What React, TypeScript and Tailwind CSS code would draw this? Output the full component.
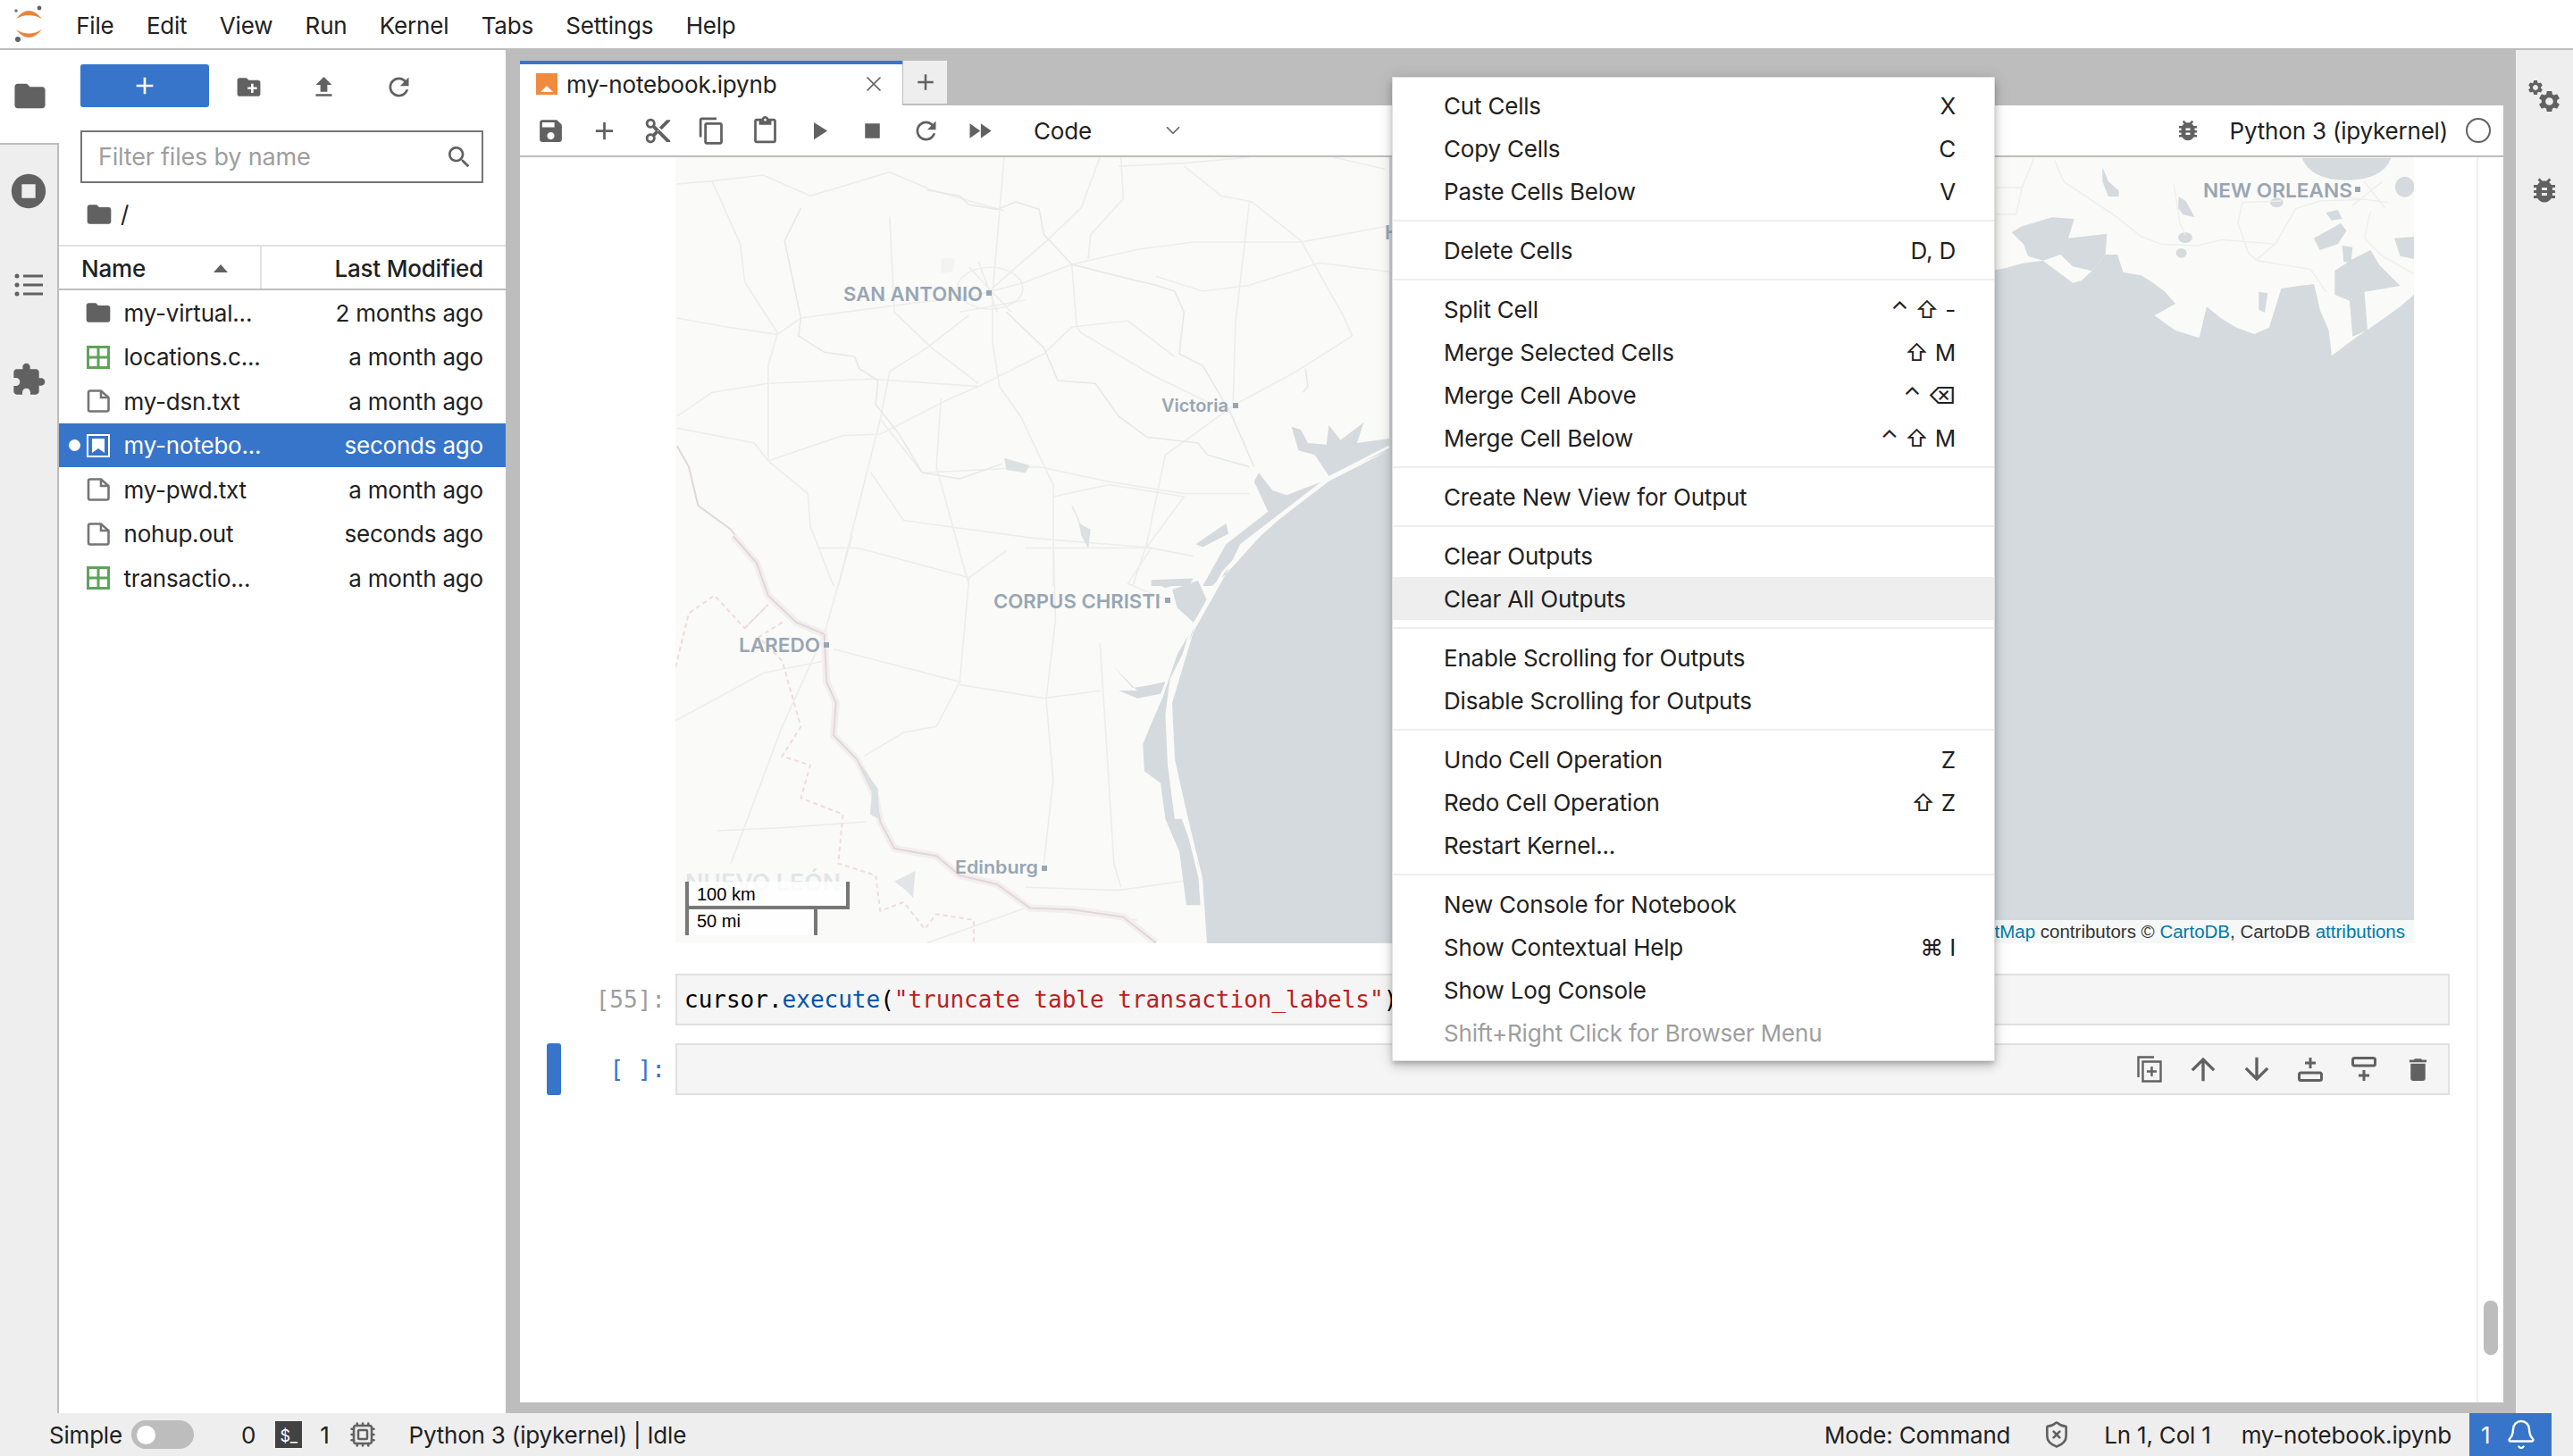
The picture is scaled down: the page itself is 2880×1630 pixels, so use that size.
import { Bell, ChevronDown, Cpu, ShieldX, X } from 'lucide-react';

const paths = {
  folder: 'M10 4H4c-1.1 0-1.99.9-1.99 2L2 18c0 1.1.9 2 2 2h16c1.1 0 2-.9 2-2V8c0-1.1-.9-2-2-2h-8l-2-2z',
  running: 'M12 2C6.48 2 2 6.48 2 12s4.48 10 10 10 10-4.48 10-10S17.52 2 12 2zm4 14H8V8h8v8z',
  puzzle:
    'M20.5 11H19V7c0-1.1-.9-2-2-2h-4V3.5C13 2.12 11.88 1 10.5 1S8 2.12 8 3.5V5H4c-1.1 0-1.99.9-1.99 2v3.8H3.5c1.49 0 2.7 1.21 2.7 2.7s-1.21 2.7-2.7 2.7H2V20c0 1.1.9 2 2 2h3.8v-1.5c0-1.49 1.21-2.7 2.7-2.7 1.49 0 2.7 1.21 2.7 2.7V22H17c1.1 0 2-.9 2-2v-4h1.5c1.38 0 2.5-1.12 2.5-2.5S21.88 11 20.5 11z',
  upload: 'M9 16h6v-6h4l-7-7-7 7h4zm-4 2h14v2H5z',
  refresh:
    'M17.65 6.35C16.2 4.9 14.21 4 12 4c-4.42 0-7.99 3.58-7.99 8s3.57 8 7.99 8c3.73 0 6.84-2.55 7.73-6h-2.08c-.82 2.33-3.04 4-5.65 4-3.31 0-6-2.69-6-6s2.69-6 6-6c1.66 0 3.14.69 4.22 1.78L13 11h7V4l-2.35 2.35z',
  newFolder:
    'M20 6h-8l-2-2H4c-1.11 0-1.99.89-1.99 2L2 18c0 1.11.89 2 2 2h16c1.11 0 2-.89 2-2V8c0-1.11-.89-2-2-2zm-1 8h-3v3h-2v-3h-3v-2h3V9h2v3h3v2z',
  search:
    'M15.5 14h-.79l-.28-.27C15.41 12.59 16 11.11 16 9.5 16 5.91 13.09 3 9.5 3S3 5.91 3 9.5 5.91 16 9.5 16c1.61 0 3.09-.59 4.23-1.57l.27.28v.79l5 4.99L20.49 19l-4.99-5zm-6 0C7.01 14 5 11.99 5 9.5S7.01 5 9.5 5 14 7.01 14 9.5 11.99 14 9.5 14z',
  save: 'M17 3H5c-1.11 0-2 .9-2 2v14c0 1.1.89 2 2 2h14c1.1 0 2-.9 2-2V7l-4-4zm-5 16c-1.66 0-3-1.34-3-3s1.34-3 3-3 3 1.34 3 3-1.34 3-3 3zm3-10H5V5h10v4z',
  add: 'M19 13h-6v6h-2v-6H5v-2h6V5h2v6h6v2z',
  cut: 'M9.64 7.64c.23-.5.36-1.05.36-1.64 0-2.21-1.79-4-4-4S2 3.79 2 6s1.79 4 4 4c.59 0 1.14-.13 1.64-.36L10 12l-2.36 2.36C7.14 14.13 6.59 14 6 14c-2.21 0-4 1.79-4 4s1.79 4 4 4 4-1.79 4-4c0-.59-.13-1.14-.36-1.64L12 14l7 7h3v-1L9.64 7.64zM6 8c-1.1 0-2-.89-2-2s.9-2 2-2 2 .89 2 2-.9 2-2 2zm0 12c-1.1 0-2-.89-2-2s.9-2 2-2 2 .89 2 2-.9 2-2 2zm6-7.5c-.28 0-.5-.22-.5-.5s.22-.5.5-.5.5.22.5.5-.22.5-.5.5zM19 3l-6 6 2 2 7-7V3z',
  copy: 'M16 1H4c-1.1 0-2 .9-2 2v14h2V3h12V1zm3 4H8c-1.1 0-2 .9-2 2v14c0 1.1.9 2 2 2h11c1.1 0 2-.9 2-2V7c0-1.1-.9-2-2-2zm0 16H8V7h11v14z',
  paste:
    'M19 2h-4.18C14.4.84 13.3 0 12 0c-1.3 0-2.4.84-2.82 2H5c-1.1 0-2 .9-2 2v16c0 1.1.9 2 2 2h14c1.1 0 2-.9 2-2V4c0-1.1-.9-2-2-2zm-7 0c.55 0 1 .45 1 1s-.45 1-1 1-1-.45-1-1 .45-1 1-1zm7 18H5V4h2v3h10V4h2v16z',
  run: 'M8 5v14l11-7z',
  stop: 'M6 6h12v12H6z',
  fastForward: 'M4 18l8.5-6L4 6v12zm9-12v12l8.5-6L13 6z',
  bug: 'M20 8h-2.81c-.45-.78-1.07-1.45-1.82-1.96L17 4.41 15.59 3l-2.17 2.17C12.96 5.06 12.49 5 12 5c-.49 0-.96.06-1.41.17L8.41 3 7 4.41l1.62 1.63C7.88 6.55 7.26 7.22 6.81 8H4v2h2.09c-.05.33-.09.66-.09 1v1H4v2h2v1c0 .34.04.67.09 1H4v2h2.81c1.04 1.79 2.97 3 5.19 3s4.15-1.21 5.19-3H20v-2h-2.09c.05-.33.09-.66.09-1v-1h2v-2h-2v-1c0-.34-.04-.67-.09-1H20V8zm-6 8h-4v-2h4v2zm0-4h-4v-2h4v2z',
  up: 'M4 12l1.41 1.41L11 7.83V20h2V7.83l5.58 5.59L20 12l-8-8-8 8z',
  down: 'M20 12l-1.41-1.41L13 16.17V4h-2v12.17l-5.58-5.59L4 12l8 8 8-8z',
  trash: 'M6 19c0 1.1.9 2 2 2h8c1.1 0 2-.9 2-2V7H6v12zM19 4h-3.5l-1-1h-5l-1 1H5v2h14V4z',
  gear: 'M19.14 12.94c.04-.3.06-.61.06-.94 0-.32-.02-.64-.07-.94l2.03-1.58c.18-.14.23-.41.12-.61l-1.92-3.32c-.12-.22-.37-.29-.59-.22l-2.39.96c-.5-.38-1.03-.7-1.62-.94l-.36-2.54c-.04-.24-.24-.41-.48-.41h-3.84c-.24 0-.43.17-.47.41l-.36 2.54c-.59.24-1.13.57-1.62.94l-2.39-.96c-.22-.08-.47 0-.59.22L2.74 8.87c-.12.21-.08.47.12.61l2.03 1.58c-.05.3-.09.63-.09.94s.02.64.07.94l-2.03 1.58c-.18.14-.23.41-.12.61l1.92 3.32c.12.22.37.29.59.22l2.39-.96c.5.38 1.03.7 1.62.94l.36 2.54c.05.24.24.41.48.41h3.84c.24 0 .44-.17.47-.41l.36-2.54c.59-.24 1.13-.56 1.62-.94l2.39.96c.22.08.47 0 .59-.22l1.92-3.32c.12-.22.07-.47-.12-.61l-2.01-1.58zM12 15.6c-1.98 0-3.6-1.62-3.6-3.6s1.62-3.6 3.6-3.6 3.6 1.62 3.6 3.6-1.62 3.6-3.6 3.6z',
};

function Icon({ d, size = 33, className = '' }: { d: string; size?: number; className?: string }) {
  return (
    <svg viewBox="0 0 24 24" width={size} height={size} fill="currentColor" className={className}>
      <path d={d} />
    </svg>
  );
}

function JupyterLogo() {
  return (
    <svg width="67" height="54" viewBox="0 0 67 54" className="shrink-0">
      <path d="M18 21 Q32 3 47 21 Q32 13 18 21Z" fill="#e9833a" />
      <path d="M18 33 Q32 51 47 33 Q32 42 18 33Z" fill="#e9833a" />
      <circle cx="44" cy="9" r="2.4" fill="#616161" />
      <circle cx="18" cy="12" r="1.8" fill="#757575" />
      <circle cx="20" cy="44" r="3" fill="#616161" />
    </svg>
  );
}

function GridFile() {
  return (
    <svg width="26" height="26" viewBox="0 0 26 26" fill="none" stroke="#5ea35a" strokeWidth="3">
      <rect x="1.5" y="1.5" width="23" height="23" />
      <path d="M13 1v24M1 13h24" />
    </svg>
  );
}

function TextFile() {
  return (
    <svg width="26" height="26" viewBox="0 0 26 26" fill="none" stroke="#757575" strokeWidth="2.6">
      <path d="M2 3.5 Q2 1.5 4 1.5 H16 L24.5 9 V22.5 Q24.5 24.5 22.5 24.5 H4 Q2 24.5 2 22.5Z" />
      <path d="M16 1.5 V9 H24.5" />
    </svg>
  );
}

function NotebookFile() {
  return (
    <svg width="26" height="26" viewBox="0 0 26 26">
      <rect x="1" y="1" width="24" height="24" fill="none" stroke="#fff" strokeWidth="2" />
      <path d="M6 5h14v16l-7-5-7 5z" fill="#fff" />
    </svg>
  );
}

const files = [
  { name: 'my-virtual...', when: '2 months ago', kind: 'folder' },
  { name: 'locations.c...', when: 'a month ago', kind: 'grid' },
  { name: 'my-dsn.txt', when: 'a month ago', kind: 'text' },
  { name: 'my-notebo...', when: 'seconds ago', kind: 'notebook' },
  { name: 'my-pwd.txt', when: 'a month ago', kind: 'text' },
  { name: 'nohup.out', when: 'seconds ago', kind: 'text' },
  { name: 'transactio...', when: 'a month ago', kind: 'grid' },
];

function FileBrowser() {
  return (
    <div className="flex w-[500px] shrink-0 flex-col bg-white">
      <div className="flex pl-6 pt-4">
        <div className="flex h-12 w-36 items-center justify-center rounded-[3px] bg-[#3675ca] text-white">
          <Icon d={paths.add} size={32} />
        </div>
        <div className="ml-[2px] flex w-[84px] items-center justify-center pt-[2px] text-[#616161]">
          <Icon d={paths.newFolder} size={31} />
        </div>
        <div className="flex w-[84px] items-center justify-center pt-[2px] text-[#616161]">
          <Icon d={paths.upload} size={31} />
        </div>
        <div className="flex w-[84px] items-center justify-center pt-[2px] text-[#616161]">
          <Icon d={paths.refresh} size={33} />
        </div>
      </div>
      <div className="ml-6 mt-[26px] flex h-[59px] w-[451px] items-center border-2 border-[#757575] pl-[18px] pr-[9px]">
        <input
          readOnly
          placeholder="Filter files by name"
          className="min-w-0 flex-1 bg-transparent pt-[2px] text-[27px] outline-none placeholder:text-[#9e9e9e]"
        />
        <Icon d={paths.search} size={32} className="text-[#616161]" />
      </div>
      <div className="flex h-[69px] items-center pl-[29px] text-[26px] text-[#212121]">
        <Icon d={paths.folder} size={32} className="text-[#616161]" />
        <span className="ml-2">/</span>
      </div>
      <div className="flex h-[51px] border-y-2 border-t-[#e0e0e0] border-b-[#bdbdbd] text-[26px] font-medium text-[#212121]">
        <div className="flex w-[227px] items-center justify-between border-r-2 border-[#e0e0e0] pl-[25px] pr-[36px] pt-[2px]">
          <span>Name</span>
          <svg width="16" height="9" viewBox="0 0 16 9">
            <path d="M8 0l8 9H0z" fill="#616161" />
          </svg>
        </div>
        <div className="flex flex-1 items-center justify-end pr-[25px] pt-[2px]">Last Modified</div>
      </div>
      {files.map((file) => {
        const selected = file.kind === 'notebook';
        return (
          <div
            key={file.name}
            className={`flex h-[49.5px] items-center pr-[25px] pt-[1px] text-[26px] ${
              selected ? 'bg-[#3675ca] text-white' : 'text-[#212121]'
            }`}
          >
            <span className="flex w-[31px] justify-end">
              {selected && <span className="mr-[7px] size-[13px] rounded-full bg-white" />}
            </span>
            <span className="flex w-[41.5px] shrink-0">
              {file.kind === 'folder' && <Icon d={paths.folder} size={32} className="-ml-[3px] text-[#616161]" />}
              {file.kind === 'grid' && <GridFile />}
              {file.kind === 'text' && <TextFile />}
              {file.kind === 'notebook' && <NotebookFile />}
            </span>
            <span>{file.name}</span>
            <span className="ml-auto">{file.when}</span>
          </div>
        );
      })}
    </div>
  );
}

const waterColor = '#d4dadd';
const landColor = '#fafaf8';

function GeoMap() {
  return (
    <svg viewBox="756 176 1946 880" width="1946" height="880" className="block">
      <rect x="756" y="176" width="1946" height="880" fill={landColor} />
      {/* central Texas */}
      <g transform="translate(750 176) scale(.523 .3333)" fill="none" stroke="#ededec" strokeWidth="1.6">
        {[
          'M15 540 L120 570 L230 595 L280 540 L400 515 L520 490 L640 470 L760 420 L860 360 L1000 310 L1120 285 L1350 285 L1540 230',
          'M90 80 L150 290 L160 420 L230 590 L210 700 L210 1020 L295 1130 L300 1240 L350 1440',
          'M715 0 L700 280 L690 460 L690 620 L705 770 L750 870 L820 1100 L820 1440',
          'M920 0 L880 170 L800 290 L740 370 L690 440',
          'M965 0 L970 140 L900 260 L895 340',
          'M1100 30 L1180 130 L1245 150 L1350 280 L1440 530 L1460 600 L1340 720 L1210 830 L1060 1000 L1020 1300 L990 1440',
          'M1040 400 L1140 450 L1240 430 L1390 355 L1540 385',
          'M1240 150 L1210 560 L1205 830',
          'M860 360 L870 570 L880 590 L1030 730 L1200 860',
          'M450 880 L470 720 L550 640 L640 530',
          'M450 880 L360 1440',
          'M470 200 L480 520 L560 640 L660 760',
          'M15 870 L90 790 L210 760 L430 745 L660 770 L800 660 L860 570 L980 550 L1080 670',
          'M15 910 L180 960 L210 1020 L370 935 L450 930 L600 810 L660 770',
          'M450 880 L540 1060 L790 1040 L940 1090 L1100 1130 L1240 1130',
          'M820 1140 L940 1100 L1100 1140 L1020 1310 L1120 1340',
          'M580 810 L570 1040 L640 1440',
          'M430 1060 L500 1220 L780 1280 L1020 1310',
          'M15 90 L90 80 L200 60 L300 130 L470 50 L560 110 L715 180',
          'M960 30 L1100 20 L1240 0',
          'M1530 40 L1420 0',
          'M620 520 L760 480 M640 370 L730 520 M660 350 L700 520',
        ].map((d) => (
          <path key={d} d={d} vectorEffect="non-scaling-stroke" />
        ))}
        <circle cx="685" cy="440" r="70" vectorEffect="non-scaling-stroke" />
        {[
          'M280 170 L245 280 L280 540 L275 600 L330 655 L395 670 L405 710 L445 750 L440 830 L490 930 L540 1060 L620 1080 L710 1030',
          'M550 110 L620 130 L640 160 L700 175 L740 150 L790 175 L800 260 L860 360 L960 400 L1040 430 L1080 450 L1100 520 L1090 660 L1140 700 L1200 860 L1250 1040',
          'M720 520 L800 640 L830 750 L910 760 L960 870 L1020 940 L1130 960 L1150 1000 L1240 1040',
          'M860 1170 L880 1240 L895 1310',
          'M1360 710 L1365 770 L1355 790',
        ].map((d) => (
          <path key={d} d={d} stroke="#e6e9eb" vectorEffect="non-scaling-stroke" />
        ))}
        <path
          d="M15 970 L40 1040 L60 1170 L130 1250 L190 1380 L205 1440"
          stroke="#e2d6d8"
          strokeWidth="2"
          vectorEffect="non-scaling-stroke"
        />
        <path d="M715 1010 L770 1035 L760 1060 L720 1050Z" fill="#dbe0e2" stroke="none" />
        <path d="M875 1230 L900 1250 L895 1315 L880 1270Z" fill="#dbe0e2" stroke="none" />
        <path d="M580 340 L610 340 L605 385 L580 390Z" fill="#f3f4f2" stroke="none" />
      </g>
      {/* south Texas and the Rio Grande */}
      <g transform="translate(750 600) scale(.523 .3333)" fill="none" stroke="#ededec" strokeWidth="1.6">
        {[
          'M390 0 L330 330 L240 640 L130 1100',
          'M820 0 L825 280 L805 550 L820 820 L800 1100',
          'M920 360 L930 600 L950 1100 L965 1180',
          'M620 490 L350 380',
          'M640 140 L620 490 L570 640 L500 660 L415 740',
          'M640 140 L400 40 L320 40',
          'M620 500 L800 545 L920 520',
          'M12 620 L200 460 L330 420',
          'M100 990 L240 980 L420 960',
          'M640 140 L720 50',
          'M760 40 L1030 40',
          'M1030 40 L980 160 L1070 220',
          'M760 1180 L960 1190 L1140 1150',
          'M550 1367 L760 1250 L1000 1290',
        ].map((d) => (
          <path key={d} d={d} vectorEffect="non-scaling-stroke" />
        ))}
        <path
          d="M135 0 L185 90 L210 200 L270 290 L330 330 L335 490 L355 560 L350 670 L400 750 L440 880 L450 960 L480 1050 L570 1075 L620 1140 L700 1170 L770 1250 L860 1255 L970 1280 L1040 1367"
          stroke="#f3efef"
          strokeWidth="8"
          vectorEffect="non-scaling-stroke"
        />
        <path
          d="M135 0 L185 90 L210 200 L270 290 L330 330 L335 490 L355 560 L350 670 L400 750 L440 880 L450 960 L480 1050 L570 1075 L620 1140 L700 1170 L770 1250 L860 1255 L970 1280 L1040 1367"
          stroke="#e2d6d8"
          strokeWidth="2"
          vectorEffect="non-scaling-stroke"
        />
        <path
          d="M12 440 L40 260 L95 200 L160 310 L210 230 L160 310 M240 290 L190 340 L240 420 L280 640 L240 740 L300 770 L280 880 L370 935 L360 1100 L440 1140 L450 1260 L500 1230 L545 1320 L570 1270 L650 1290 L650 1367"
          stroke="#efdcdc"
          strokeWidth="2"
          strokeDasharray="5 4"
          vectorEffect="non-scaling-stroke"
        />
        <path d="M480 1160 L525 1125 L520 1215 L505 1190Z" fill="#e1e5e7" stroke="none" />
        <path d="M405 760 L445 850 L448 950 L428 935 L432 860Z" fill="#dbe0e2" stroke="none" />
      </g>
      {/* gulf: water is drawn on top of the land */}
      <path
        d="M1555 504 L1487 539 L1430 583 L1411 600 L1372 643 L1336 707 L1312 787 L1315 850 L1330 917 L1346 983 L1351 1056 H2702 V176 H1555Z"
        fill={waterColor}
      />
      <g transform="translate(750 176) scale(.523 .3333)" fill={waterColor}>
        <path d="M1330 905 L1350 915 L1365 960 L1405 965 L1410 900 L1435 950 L1485 890 L1470 960 L1540 945 L1540 985 L1410 1070 L1380 1000 L1345 985Z" />
        <path d="M1260 1060 L1290 1120 L1320 1135 L1395 1090 L1290 1215 L1220 1300 L1190 1400 L1160 1440 L1140 1440 L1190 1300 L1280 1190 L1250 1090Z" />
        <path d="M1125 1300 L1190 1230 L1195 1265 L1140 1310Z" />
        <path d="M1030 1420 L1120 1415 L1110 1440 L1030 1440Z" />
      </g>
      <g transform="translate(750 600) scale(.523 .3333)" fill={waterColor}>
        <path d="M1075 180 L1130 150 L1150 220 L1120 290 L1085 240Z" />
        <path d="M1030 150 L1100 155 L1060 175Z" />
        <path d="M1125 290 L1085 400 L1055 540 L1030 630 L1012 700 L1015 790 L1050 830 L1060 950 L1090 1060 L1105 1240 L1140 1240 L1130 1100 L1095 950 L1080 950 L1065 770 L1060 600 L1070 480 L1115 340Z" />
        <path d="M950 440 L990 510 L1030 500 L1060 490 L1050 530 L1000 545 L960 520 L1000 520Z" />
      </g>
      {/* barrier islands along the coast */}
      <path
        d="M1555 500 L1487 535 L1430 579 L1409 597 L1369 641 L1333 706 L1309 787 L1312 850 L1327 917 L1343 983 L1348 1056"
        fill="none"
        stroke={landColor}
        strokeWidth="3"
      />
      {/* Louisiana */}
      <g transform="translate(2220 170) scale(.3333)">
        <path
          d="M0 0 H1446 V480 L1400 520 L1330 570 L1250 625 L1170 685 L1160 600 L1130 530 L1110 445 L1000 460 L960 590 L910 612 L850 590 L800 560 L750 520 L725 625 L645 600 L575 550 L645 510 L610 470 L570 440 L530 415 L470 405 L450 345 L410 345 L365 400 L330 432 L300 440 L200 365 L130 375 L75 390 L0 405Z"
          fill={landColor}
        />
        <g fill={waterColor}>
          <path d="M95 270 L130 250 L230 220 L305 225 L285 290 L415 275 L410 345 L365 400 L300 385 L260 345 L200 365 L150 350 L135 310Z" />
          <path d="M1070 20 H1370 Q1340 95 1220 95 Q1100 95 1070 20Z" />
          <ellipse cx="1415" cy="118" rx="32" ry="34" />
          <path d="M1110 290 L1200 240 L1220 265 L1190 310 L1130 330Z" />
          <path d="M1150 205 L1190 195 L1205 225 L1170 230Z" />
          <path d="M655 150 L680 165 L710 220 L670 210 L655 190Z" />
          <ellipse cx="678" cy="288" rx="24" ry="18" />
          <ellipse cx="665" cy="340" rx="18" ry="16" />
          <ellipse cx="985" cy="170" rx="22" ry="16" />
          <path d="M400 50 L420 100 L455 130 L455 150 L420 150 L400 100Z" />
          <path d="M1180 400 L1240 360 L1300 330 L1330 380 L1400 450 L1280 470 L1290 600 L1240 620 L1230 500 L1180 480Z" />
          <path d="M1205 315 L1240 320 L1235 370 L1210 370Z" />
          <path d="M1380 290 L1446 285 L1446 360 L1400 350Z" />
          <path d="M1000 460 L1060 450 L1110 445 L1130 530 L1060 520 L1000 530Z" />
          <path d="M925 470 L955 475 L945 540 L925 530Z" />
        </g>
        <g fill="none" stroke="#eeeeee" strokeWidth="4">
          <path d="M240 30 L270 100 L450 220 L530 285 L600 310 L720 315 L800 295 L980 310 L1050 190 L1130 165 L1270 160" />
          <path d="M640 110 L660 240 L680 280" />
          <path d="M855 240 L890 340 L920 365 L1100 395 L1150 470" />
          <path d="M855 240 L870 170 L1000 165" />
          <path d="M920 360 L980 310" />
          <path d="M1300 200 L1280 290 L1340 350 L1446 410" />
          <path d="M45 120 H130 L110 210 H45 M130 120 L170 20" />
          <path d="M1200 150 L1360 170 M1280 100 L1350 190 M1240 180 L1340 100" />
        </g>
      </g>
      <g className="font-semibold" fill="#98a6b3" fontFamily="Inter, sans-serif">
        <text x="944" y="337" fontSize="22" textLength="156" lengthAdjust="spacingAndGlyphs">SAN ANTONIO</text>
        <rect x="1104" y="325" width="6" height="6" />
        <text x="1300" y="461" fontSize="20" textLength="75" lengthAdjust="spacingAndGlyphs">Victoria</text>
        <rect x="1380" y="451" width="6" height="6" />
        <text x="1112" y="681" fontSize="22" textLength="187" lengthAdjust="spacingAndGlyphs">CORPUS CHRISTI</text>
        <rect x="1304" y="669" width="6" height="6" />
        <text x="827" y="730" fontSize="22" textLength="91" lengthAdjust="spacingAndGlyphs">LAREDO</text>
        <rect x="922" y="719" width="6" height="6" />
        <text x="1069" y="978" fontSize="20" textLength="93" lengthAdjust="spacingAndGlyphs">Edinburg</text>
        <rect x="1166" y="969" width="6" height="6" />
        <text x="1550" y="268" fontSize="22">H</text>
        <text x="2466" y="221" fontSize="22" textLength="167" lengthAdjust="spacingAndGlyphs">NEW ORLEANS</text>
        <rect x="2636" y="209" width="6" height="6" />
        <text x="767" y="997" fontSize="26" fill="#e2e5e8" textLength="174" lengthAdjust="spacingAndGlyphs">NUEVO LEÓN</text>
      </g>
    </svg>
  );
}

function NotebookOutput() {
  return (
    <div className="relative ml-[174px] h-[880px] w-[1946px] shrink-0 tracking-normal [font-family:'Liberation_Sans',sans-serif]">
      <GeoMap />
      <div className="absolute left-[11px] top-[811px] text-[20px] leading-none text-black">
        <div className="h-[31px] w-[184px] border-x-4 border-b-4 border-[#777] bg-white/80 pl-[9px] pt-[4px]">100 km</div>
        <div className="h-[29px] w-[148px] border-x-4 border-[#777] bg-white/80 pl-[9px] pt-[3px]">50 mi</div>
      </div>
      <div className="absolute bottom-0 right-0 h-[26px] whitespace-nowrap bg-white/80 pl-[12px] pr-[10px] text-[20.5px] leading-[25px] text-[#333]">
        <span className="text-[#0078a8]">OpenStreetMap</span> contributors © <span className="text-[#0078a8]">CartoDB</span>, CartoDB{' '}
        <span className="text-[#0078a8]">attributions</span>
      </div>
    </div>
  );
}

function DuplicateIcon() {
  return (
    <svg width="28" height="30" viewBox="0 0 28 30" fill="none" stroke="#616161" strokeWidth="2.4">
      <path d="M1.5 24 V1.5 H19" />
      <path d="M6.5 6.5 H26.5 V28.5 H6.5Z" />
      <path d="M16.5 12 V23 M11 17.5 H22" />
    </svg>
  );
}

function InsertAbove() {
  return (
    <svg width="28" height="28" viewBox="0 0 28 28" fill="none" stroke="#616161" strokeWidth="3">
      <rect x="1.5" y="18" width="25" height="8.5" rx="2" />
      <path d="M14 1 V13 M8 7 H20" />
    </svg>
  );
}

function InsertBelow() {
  return (
    <svg width="28" height="28" viewBox="0 0 28 28" fill="none" stroke="#616161" strokeWidth="3">
      <rect x="1.5" y="1.5" width="25" height="8.5" rx="2" />
      <path d="M14 15 V27 M8 21 H20" />
    </svg>
  );
}

function Cells() {
  return (
    <div className="font-['DejaVu_Sans_Mono',monospace] text-[26px] tracking-normal">
      <div className="mt-[34px] flex">
        <div className="flex w-[174px] shrink-0 items-center justify-end pr-[11px] text-[#9e9e9e]">[55]:</div>
        <div className="flex h-[58px] w-[1986px] items-center border-2 border-[#e0e0e0] bg-[#f5f5f5] pl-2 whitespace-nowrap text-black">
          cursor.<span className="text-[#0055aa]">execute</span>(
          <span className="text-[#ba2121]">"truncate table transaction_labels"</span>)
        </div>
      </div>
      <div className="mt-[20px] flex">
        <div className="flex w-[174px] shrink-0 items-center pl-[30px] pr-[11px] text-[#3675ca]">
          <span className="h-[58px] w-4 rounded-[3px] bg-[#3675ca]" />
          <span className="ml-auto whitespace-pre">[ ]:</span>
        </div>
        <div className="flex h-[58px] w-[1986px] items-center justify-end border-2 border-[#e0e0e0] bg-[#f5f5f5] pr-[4px] text-[#616161]">
          <span className="flex w-[60px] justify-center">
            <DuplicateIcon />
          </span>
          <span className="flex w-[60px] justify-center">
            <Icon d={paths.up} size={40} />
          </span>
          <span className="flex w-[60px] justify-center">
            <Icon d={paths.down} size={40} />
          </span>
          <span className="flex w-[60px] justify-center">
            <InsertAbove />
          </span>
          <span className="flex w-[60px] justify-center">
            <InsertBelow />
          </span>
          <span className="flex w-[60px] justify-center">
            <Icon d={paths.trash} size={33} />
          </span>
        </div>
      </div>
    </div>
  );
}

const toolbarIcons = [paths.save, paths.add, paths.cut, paths.copy, paths.paste, paths.run, paths.stop, paths.refresh, paths.fastForward];

function Notebook() {
  return (
    <div className="flex min-w-0 flex-1 flex-col">
      <div className="flex h-[62px] shrink-0 items-start pt-3">
        <div className="flex h-[50px] w-[428px] items-center border-t-4 border-[#3675ca] bg-white pb-[2px] pl-[18px] pr-[18px] text-[26px] text-[#212121]">
          <svg width="24" height="24" viewBox="0 0 24 24" className="shrink-0">
            <rect x="1" y="1" width="22" height="22" fill="#ef8a3e" stroke="#ef8a3e" strokeWidth="2" />
            <path d="M5 21 L12 14 L19 21Z" fill="#fff" />
          </svg>
          <span className="ml-[10px]">my-notebook.ipynb</span>
          <X size={28} strokeWidth={1.5} className="ml-auto text-[#616161]" />
        </div>
        <div className="ml-[1px] flex h-12 w-[49px] items-center justify-center bg-[#eeeeee] text-[#616161]">
          <Icon d={paths.add} size={30} />
        </div>
      </div>
      <div className="flex h-[58px] shrink-0 items-center border-b-2 border-[#bdbdbd] bg-white pl-1 text-[26px] text-[#212121]">
        {toolbarIcons.map((d, i) => (
          <span key={i} className="flex w-[60px] justify-center text-[#616161]">
            <Icon d={d} />
          </span>
        ))}
        <div className="flex w-[200px] items-center justify-between pl-[31px]">
          <span>Code</span>
          <ChevronDown size={26} strokeWidth={1.6} className="text-[#616161]" />
        </div>
        <div className="ml-auto flex items-center pr-[14px]">
          <Icon d={paths.bug} size={30} className="text-[#616161]" />
          <span className="ml-[32px]">Python 3 (ipykernel)</span>
          <span className="ml-5 size-[28px] rounded-full border-2 border-[#616161]" />
        </div>
      </div>
      <div className="flex min-h-0 flex-1 bg-white">
        <div className="min-w-0 flex-1 overflow-hidden">
          <NotebookOutput />
          <Cells />
        </div>
        <div className="flex w-[30px] shrink-0 flex-col justify-end border-l-2 border-[#eeeeee] pb-[53px] pl-[6px]">
          <div className="h-[61px] w-4 rounded-lg bg-[#bdbdbd]" />
        </div>
      </div>
    </div>
  );
}

type MenuItem = { label: string; keys?: string; disabled?: boolean; hover?: boolean };

const menuGroups: MenuItem[][] = [
  [
    { label: 'Cut Cells', keys: 'X' },
    { label: 'Copy Cells', keys: 'C' },
    { label: 'Paste Cells Below', keys: 'V' },
  ],
  [{ label: 'Delete Cells', keys: 'D, D' }],
  [
    { label: 'Split Cell', keys: '⌃ ⇧ -' },
    { label: 'Merge Selected Cells', keys: '⇧ M' },
    { label: 'Merge Cell Above', keys: '⌃ ⌫' },
    { label: 'Merge Cell Below', keys: '⌃ ⇧ M' },
  ],
  [{ label: 'Create New View for Output' }],
  [{ label: 'Clear Outputs' }, { label: 'Clear All Outputs', hover: true }],
  [{ label: 'Enable Scrolling for Outputs' }, { label: 'Disable Scrolling for Outputs' }],
  [{ label: 'Undo Cell Operation', keys: 'Z' }, { label: 'Redo Cell Operation', keys: '⇧ Z' }, { label: 'Restart Kernel...' }],
  [
    { label: 'New Console for Notebook' },
    { label: 'Show Contextual Help', keys: '⌘ I' },
    { label: 'Show Log Console' },
    { label: 'Shift+Right Click for Browser Menu', disabled: true },
  ],
];

function ContextMenu() {
  return (
    <div className="absolute left-[1558px] top-[86px] w-[675px] border border-[#e0e0e0] bg-white py-[7px] text-[26px] text-[#212121] shadow-[0_3px_5px_-1px_rgba(0,0,0,0.2),0_6px_10px_0_rgba(0,0,0,0.14),0_1px_18px_0_rgba(0,0,0,0.12)]">
      {menuGroups.map((group, g) => (
        <div key={g}>
          {g > 0 && (
            <div className="flex h-[18px] items-center">
              <div className="h-[2px] w-full bg-[#eeeeee]" />
            </div>
          )}
          {group.map((item) => (
            <div
              key={item.label}
              className={`flex h-12 items-center justify-between pl-[57px] pr-[43px] ${item.hover ? 'bg-[#eeeeee]' : ''} ${
                item.disabled ? 'text-[#9e9e9e]' : ''
              }`}
            >
              <span>{item.label}</span>
              {item.keys && <span className="whitespace-pre">{item.keys}</span>}
            </div>
          ))}
        </div>
      ))}
    </div>
  );
}

function StatusBar() {
  return (
    <div className="flex h-12 shrink-0 items-center bg-[#eeeeee] text-[26px] text-[#212121]">
      <span className="ml-[55px]">Simple</span>
      <span className="ml-[10px] flex h-8 w-[70px] items-center rounded-full bg-[#bdbdbd] pl-[6px]">
        <span className="size-[21px] rounded-full bg-white" />
      </span>
      <span className="ml-[53px]">0</span>
      <span className="ml-[22px] flex h-[30px] w-[30px] items-end justify-center bg-[#424242] pb-[1px] text-[18px] leading-[24px] text-white">$_</span>
      <span className="ml-[20px]">1</span>
      <Cpu size={30} strokeWidth={2} className="ml-[22px] text-[#616161]" />
      <span className="ml-[37px]">Python 3 (ipykernel) | Idle</span>
      <span className="ml-auto">Mode: Command</span>
      <ShieldX size={32} strokeWidth={2} className="ml-[36px] text-[#616161]" />
      <span className="ml-[37px]">Ln 1, Col 1</span>
      <span className="ml-[34px]">my-notebook.ipynb</span>
      <span className="ml-5 flex h-12 w-[92px] items-center bg-[#3675ca] pl-[13px] text-white">
        1
        <Bell size={36} strokeWidth={1.6} className="ml-[17px]" />
      </span>
      <span className="w-6" />
    </div>
  );
}

export default function App() {
  return (
    <div className="relative flex h-[1630px] w-[2880px] flex-col overflow-hidden bg-[#bdbdbd] tracking-[-0.2px] [font-family:Inter,'DejaVu_Sans',sans-serif]">
      <div className="flex h-14 shrink-0 items-start border-b-2 border-[#bdbdbd] bg-white text-[26px] text-[#212121]">
        <JupyterLogo />
        {['File', 'Edit', 'View', 'Run', 'Kernel', 'Tabs', 'Settings', 'Help'].map((m) => (
          <span key={m} className="flex h-[54px] items-center px-[18.2px] pt-[3px]">
            {m}
          </span>
        ))}
      </div>
      <div className="flex min-h-0 flex-1">
        <div className="flex w-[66px] shrink-0 flex-col">
          <div className="flex h-[104px] items-center justify-center bg-white pb-[2px] text-[#616161]">
            <Icon d={paths.folder} size={41} />
          </div>
          <div className="flex flex-1 flex-col items-center border-t-2 border-r-2 border-[#bdbdbd] bg-[#eeeeee] text-[#616161]">
            <div className="flex h-[104px] items-center">
              <Icon d={paths.running} size={46} />
            </div>
            <div className="flex h-[106px] items-center">
              <svg width="32" height="26" viewBox="0 0 32 26" fill="#616161">
                <circle cx="3" cy="3" r="2.5" />
                <circle cx="3" cy="13" r="2.5" />
                <circle cx="3" cy="23" r="2.5" />
                <rect x="10" y="1.5" width="22" height="3" />
                <rect x="10" y="11.5" width="22" height="3" />
                <rect x="10" y="21.5" width="22" height="3" />
              </svg>
            </div>
            <div className="flex h-[106px] items-center">
              <Icon d={paths.puzzle} size={40} />
            </div>
          </div>
        </div>
        <FileBrowser />
        <div className="flex min-w-0 flex-1 pl-4 pr-[14px] pb-3">
          <Notebook />
        </div>
        <div className="flex w-16 shrink-0 flex-col items-center bg-[#eeeeee] text-[#616161]">
          <div className="flex h-[104px] items-center">
            <svg width="40" height="40" viewBox="0 0 40 40" fill="currentColor">
              <svg x="0" y="0" width="20" height="20" viewBox="0 0 24 24">
                <path d={paths.gear} />
              </svg>
              <svg x="11" y="11" width="29" height="29" viewBox="0 0 24 24">
                <path d={paths.gear} />
              </svg>
            </svg>
          </div>
          <div className="flex h-[106px] items-center">
            <Icon d={paths.bug} size={36} />
          </div>
        </div>
      </div>
      <StatusBar />
      <ContextMenu />
    </div>
  );
}
